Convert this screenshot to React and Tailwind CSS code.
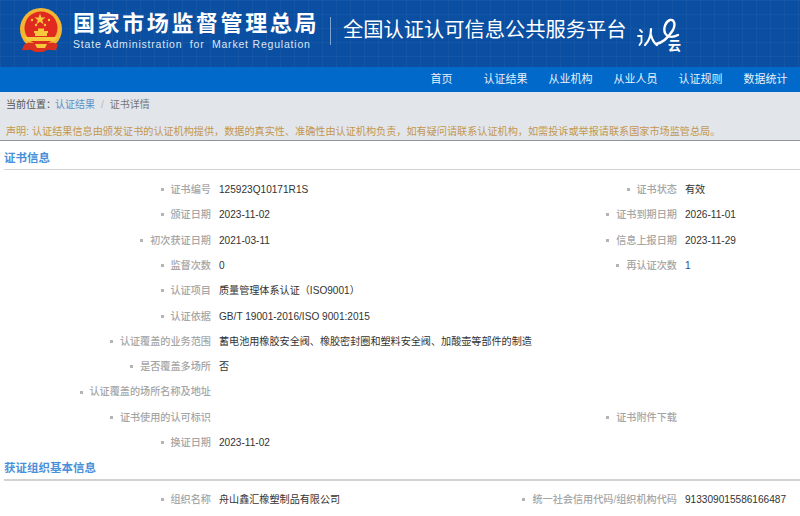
import React from 'react';

const cjk = "font-['Liberation_Sans','Noto_Sans_CJK_SC',sans-serif]";

const navItems = [
  ['首页', 'w-[63px]'],
  ['认证结果', 'w-[65px]'],
  ['从业机构', 'w-[65px]'],
  ['从业人员', 'w-[65px]'],
  ['认证规则', 'w-[65px]'],
  ['数据统计', 'w-[65px]'],
];

function Emblem() {
  return (
    <svg width="44" height="46" viewBox="0 0 44 46" className="shrink-0">
      <circle cx="22" cy="21" r="21" fill="#f2b632" />
      <circle cx="22" cy="20" r="16.5" fill="#e02a20" />
      <polygon points="21,5.5 22.4,9.6 26.6,9.6 23.2,12.1 24.5,16.2 21,13.7 17.5,16.2 18.8,12.1 15.4,9.6 19.6,9.6" fill="#f6c83c" />
      <circle cx="13" cy="12" r="1.2" fill="#f6c83c" />
      <circle cx="30" cy="12" r="1.2" fill="#f6c83c" />
      <circle cx="17" cy="17" r="1.2" fill="#f6c83c" />
      <circle cx="26" cy="17" r="1.2" fill="#f6c83c" />
      <path d="M15 23h14v2h-1v3h-12v-3h-1z" fill="#f6c83c" />
      <rect x="19" y="20.5" width="6" height="2.5" fill="#f6c83c" />
      <path d="M5 29h34l-3 4H8z" fill="#f6c83c" />
      <path d="M5 37c3-3 6-2 9-2l3-1h10l3 1c3 0 6-1 9 2l-2 5c-3 1-6-1-9 0l-4 2h-8l-4-2c-3-1-6 1-9 0z" fill="#d9301f" />
      <path d="M16 36h12l-2 4h-8z" fill="#f6c83c" />
    </svg>
  );
}

function CloudLogo() {
  return (
    <svg width="48" height="38" viewBox="0 0 48 38" className="shrink-0">
      <g fill="none" stroke="#fff" strokeLinecap="round">
        <path d="M3 12l2 2M1 18h3.500v6l-2 3" strokeWidth="1.800" />
        <path d="M14 11c0 6-2 12-6 16M14 17c1 4 3 8 6 10" strokeWidth="2.200" />
        <path d="M19 26c6-1 12-6 17-14 3-6 1-11-3-10-4 1-7 8-5 13 2 4 7 5 13 2" strokeWidth="2.400" />
      </g>
      <text x="31" y="32" fill="#fff" fontSize="13" fontWeight="700" fontFamily="'Noto Sans CJK SC', sans-serif">云</text>
    </svg>
  );
}

function Label({ children, className = 'w-[211px]' }) {
  return (
    <div className={`${className} shrink-0 flex justify-end items-center gap-[7px] text-[10.150px] text-[#a6a6a6] font-medium whitespace-nowrap`}>
      <span className="w-[3px] h-[3px] bg-[#b4b4b4]" />
      <span>{children}</span>
    </div>
  );
}

function Row({ label, value, rightLabel, rightValue, rightClass = 'text-[#333333]' }) {
  return (
    <div className="flex items-center h-[25.300px] text-[10.100px] text-[#333333]">
      <Label>{label}</Label>
      <div className="w-[255px] shrink-0 pl-2 whitespace-nowrap">{value}</div>
      {rightLabel && <Label>{rightLabel}</Label>}
      {rightLabel && <div className={`pl-2 whitespace-nowrap ${rightClass}`}>{rightValue}</div>}
    </div>
  );
}

function SectionTitle({ children, className = '' }) {
  return (
    <div className={`ml-1 border-b border-[#d2d2d2] text-[11.500px] font-bold text-[#4a90d9] leading-[14px] ${className}`}>
      {children}
    </div>
  );
}

export default function App() {
  return (
    <div className={`w-[800px] h-[516px] overflow-hidden bg-white ${cjk}`}>
      {/* Header */}
      <div className="h-[67px] bg-[#0b4fa2] bg-[linear-gradient(rgba(255,255,255,0.035)_1px,transparent_1px),linear-gradient(90deg,rgba(255,255,255,0.035)_1px,transparent_1px)] bg-[size:14px_14px] flex items-center pl-[19px] pb-[6px]">
        <Emblem />
        <div className="ml-[10px] text-white">
          <div className="text-[22px] leading-[26px] font-bold tracking-[2.600px] whitespace-nowrap">国家市场监督管理总局</div>
          <div className="text-[10.500px] leading-[12px] tracking-[0.800px] text-[#dce6f4] whitespace-pre mt-[1px]">State Administration  for  Market Regulation</div>
        </div>
        <div className="ml-[11px] w-px h-[28px] bg-[#7fa3d1]" />
        <div className="ml-[12px] text-[20.250px] text-white whitespace-nowrap">全国认证认可信息公共服务平台</div>
        <div className="ml-[10px] mt-[12px]">
          <CloudLogo />
        </div>
      </div>

      {/* Nav */}
      <div className="h-[25px] bg-[#0069ca] flex justify-end items-center pr-[2px] text-[11px] text-[#e8f1fb]">
        {navItems.map(([name, w]) => (
          <div key={name} className={`${w} text-center`}>{name}</div>
        ))}
      </div>

      {/* Breadcrumb and notice */}
      <div className="h-[49px] bg-[#e2e6ea] border-b border-[#8f9499] pt-[7px] pl-[6px]">
        <div className="flex items-center text-[10px] leading-[12px] text-[#555555] whitespace-nowrap">
          <span>当前位置：</span>
          <span className="-ml-[1px] text-[#5b8fc7]">认证结果</span>
          <span className="mx-[6px] text-[#b5b9bd]">/</span>
          <span className="text-[#777777]">证书详情</span>
        </div>
        <div className="mt-[15px] text-[10.130px] leading-[12px] text-[#c4964e] whitespace-nowrap">
          声明: 认证结果信息由颁发证书的认证机构提供，数据的真实性、准确性由认证机构负责，如有疑问请联系认证机构，如需投诉或举报请联系国家市场监管总局。
        </div>
      </div>

      {/* Certificate info */}
      <SectionTitle className="mt-[10px] pb-[4px]">证书信息</SectionTitle>
      <div className="pt-[7px]">
        <Row label="证书编号" value="125923Q10171R1S" rightLabel="证书状态" rightValue="有效" />
        <Row label="颁证日期" value="2023-11-02" rightLabel="证书到期日期" rightValue="2026-11-01" />
        <Row label="初次获证日期" value="2021-03-11" rightLabel="信息上报日期" rightValue="2023-11-29" />
        <Row label="监督次数" value="0" rightLabel="再认证次数" rightValue="1" rightClass="text-[#2a4d8f]" />
        <Row label="认证项目" value="质量管理体系认证（ISO9001）" />
        <Row label="认证依据" value="GB/T 19001-2016/ISO 9001:2015" />
        <Row label="认证覆盖的业务范围" value="蓄电池用橡胶安全阀、橡胶密封圈和塑料安全阀、加酸壶等部件的制造" />
        <Row label="是否覆盖多场所" value="否" />
        <Row label="认证覆盖的场所名称及地址" value="" />
        <Row label="证书使用的认可标识" value="" rightLabel="证书附件下载" rightValue="" />
        <Row label="换证日期" value="2023-11-02" />
      </div>

      {/* Organization info */}
      <SectionTitle className="mt-[6px] pb-[4px] border-b-2">获证组织基本信息</SectionTitle>
      <div className="pt-[6px]">
        <Row label="组织名称" value="舟山鑫汇橡塑制品有限公司" rightLabel="统一社会信用代码/组织机构代码" rightValue="913309015586166487" />
      </div>
    </div>
  );
}
